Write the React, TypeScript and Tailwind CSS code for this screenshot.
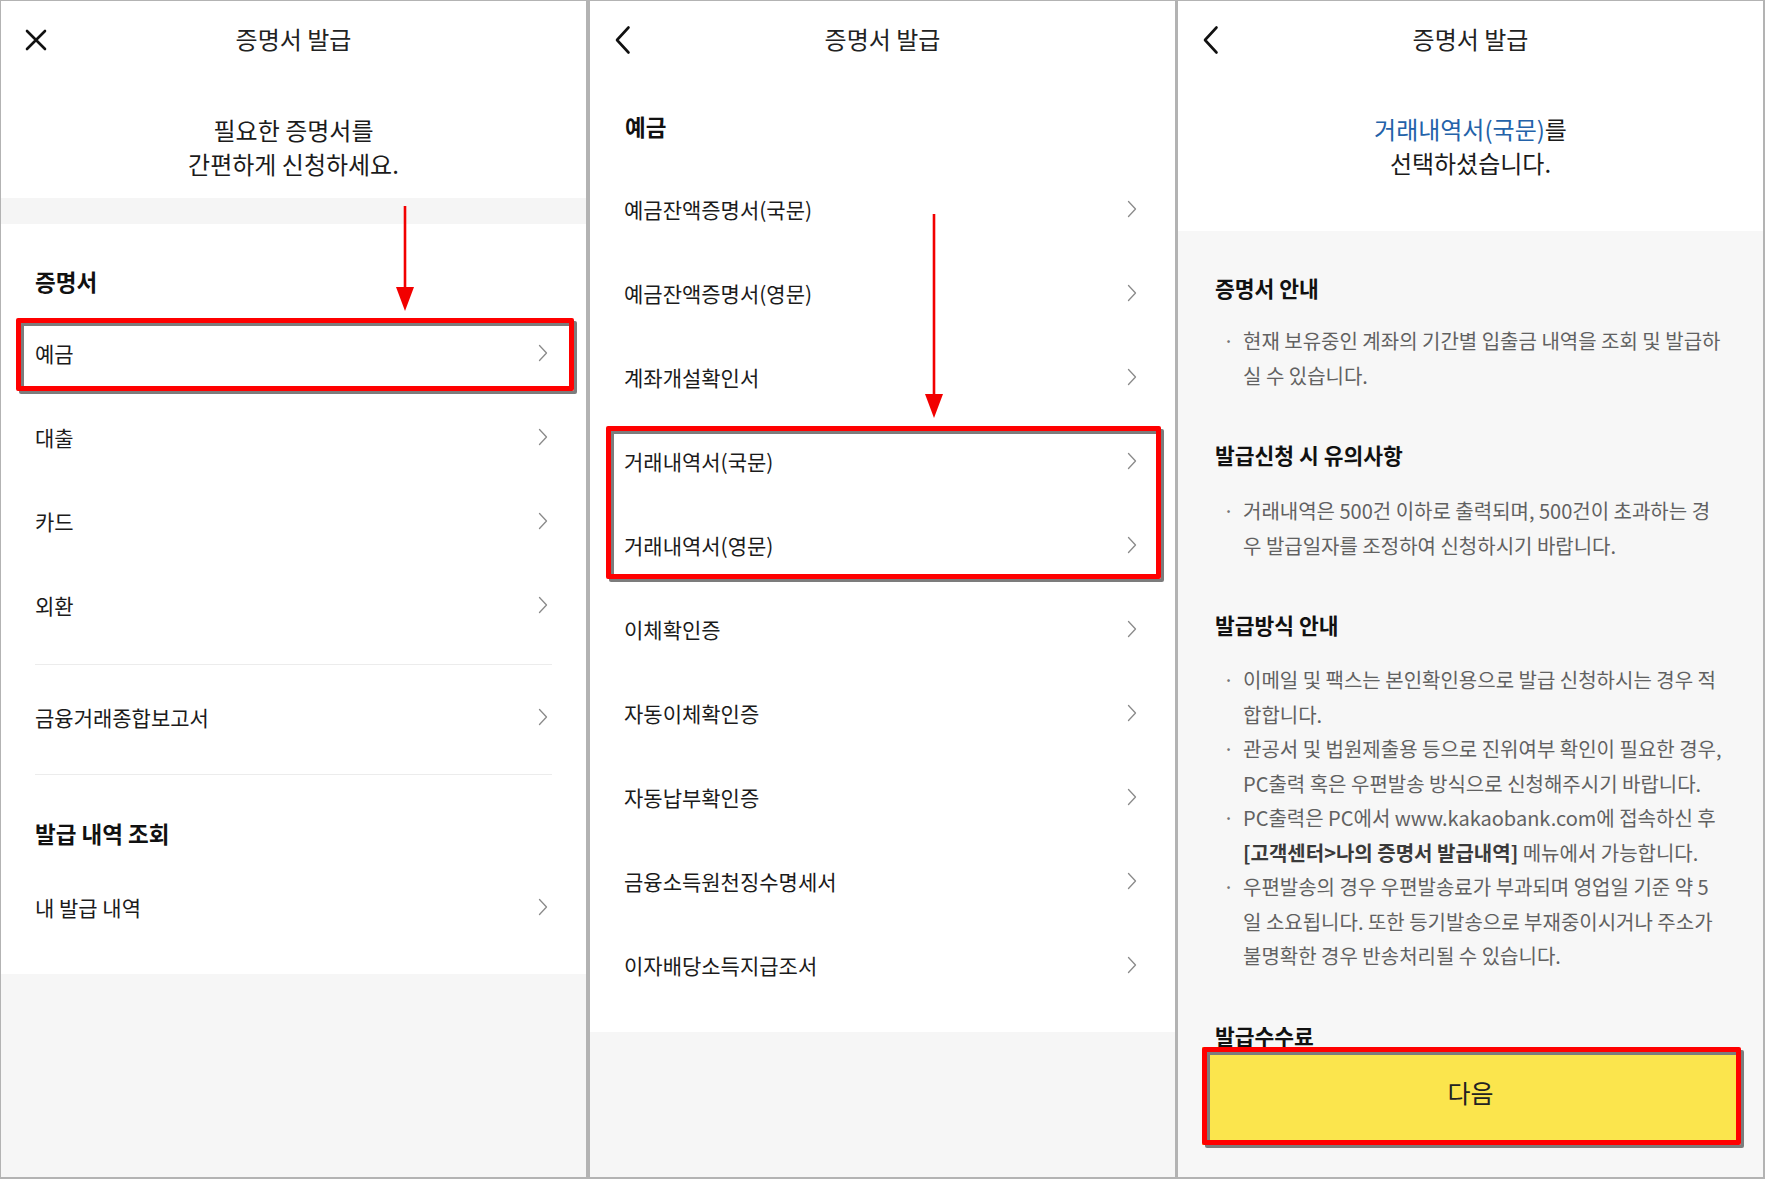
import React from "react";

function Chevron() {
  return (
    <svg width="10" height="18" viewBox="0 0 10 18" fill="none" className="shrink-0">
      <path d="M1.5 1.5 L8.5 9 L1.5 16.5" stroke="#8a8a8a" strokeWidth="1.3" strokeLinecap="round" strokeLinejoin="round" />
    </svg>
  );
}

function CloseIcon() {
  return (
    <svg width="22" height="22" viewBox="0 0 22 22" fill="none">
      <path d="M2 2 L20 20 M20 2 L2 20" stroke="#111" strokeWidth="2.6" strokeLinecap="round" />
    </svg>
  );
}

function BackIcon() {
  return (
    <svg width="17" height="30" viewBox="0 0 17 30" fill="none">
      <path d="M14.5 2.5 L3 15 L14.5 27.5" stroke="#111" strokeWidth="2.6" strokeLinecap="round" strokeLinejoin="round" />
    </svg>
  );
}

function Arrow({ height }: { height: number }) {
  return (
    <svg width="20" height={height} viewBox={`0 0 20 ${height}`} fill="none">
      <path d={`M10 0 L10 ${height - 18}`} stroke="#f20000" strokeWidth="2.6" />
      <polygon points={`1,${height - 24} 19,${height - 24} 10,${height}`} fill="#f20000" />
    </svg>
  );
}

function NavBar({ back }: { back?: boolean }) {
  return (
    <div className="grid h-[80px] shrink-0 grid-cols-[70px_1fr_70px] items-center bg-white pb-[3px]">
      <div className="flex items-center pl-[24px]">{back ? <BackIcon /> : <CloseIcon />}</div>
      <div className="pb-[2px] text-center text-[24px] leading-none text-[#222]">증명서 발급</div>
      <div />
    </div>
  );
}

function Row({ label }: { label: string }) {
  return (
    <div className="flex h-[84px] items-center justify-between pl-[34px] pr-[38px]">
      <span className="text-[21px] leading-none text-[#1b1b1b]">{label}</span>
      <Chevron />
    </div>
  );
}

function RedBox({ className }: { className: string }) {
  return (
    <div
      className={`pointer-events-none absolute rounded-[2px] border-[5px] border-[#ff0000] shadow-[3px_3px_0_#7c7c7c,inset_3px_3px_0_#7c7c7c] ${className}`}
    />
  );
}

function PanelOne() {
  return (
    <div className="relative flex h-full w-[585px] shrink-0 flex-col bg-[#f6f6f6]">
      <NavBar />
      <div className="bg-white pb-[17px] pt-[32px] text-center text-[24px] leading-[34px] text-[#1b1b1b]">
        필요한 증명서를
        <br />
        간편하게 신청하세요.
      </div>
      <div className="h-[26px] bg-[#f5f5f5]" />
      <div className="bg-white pb-[25px] pt-[42px]">
        <h2 className="pl-[34px] text-[22.5px] font-bold leading-[30px] text-[#111]">증명서</h2>
        <div className="relative mt-[15px]">
          <Row label="예금" />
          <Row label="대출" />
          <Row label="카드" />
          <Row label="외환" />
          <RedBox className="left-[15px] right-[12px] top-[7px] h-[73px]" />
        </div>
        <div className="mx-[34px] mt-[17px] h-px bg-[#ececec]" />
        <div className="mt-[10px]">
          <Row label="금융거래종합보고서" />
        </div>
        <div className="mx-[34px] mt-[15px] h-px bg-[#ececec]" />
        <h2 className="mt-[43px] pl-[34px] text-[22.5px] font-bold leading-[30px] text-[#111]">발급 내역 조회</h2>
        <div className="mt-[17px]">
          <Row label="내 발급 내역" />
        </div>
      </div>
      <div className="flex-1" />
      <div className="pointer-events-none absolute left-[394px] top-[205px]">
        <Arrow height={105} />
      </div>
    </div>
  );
}

function PanelTwo() {
  const items = [
    "예금잔액증명서(국문)",
    "예금잔액증명서(영문)",
    "계좌개설확인서",
    "거래내역서(국문)",
    "거래내역서(영문)",
    "이체확인증",
    "자동이체확인증",
    "자동납부확인증",
    "금융소득원천징수명세서",
    "이자배당소득지급조서",
  ];
  return (
    <div className="relative flex h-full w-[585px] shrink-0 flex-col bg-[#f6f6f6]">
      <NavBar back />
      <div className="bg-white pb-[25px] pt-[30px]">
        <h2 className="pl-[35px] text-[22.5px] font-bold leading-[30px] text-[#111]">예금</h2>
        <div className="relative mt-[26px]">
          {items.map((it) => (
            <Row key={it} label={it} />
          ))}
          <RedBox className="left-[16px] right-[14px] top-[259px] h-[153px]" />
        </div>
      </div>
      <div className="flex-1" />
      <div className="pointer-events-none absolute left-[334px] top-[213px]">
        <Arrow height={204} />
      </div>
    </div>
  );
}

function Bullet({ lines }: { lines: React.ReactNode[] }) {
  return (
    <div className="flex">
      <span className="w-[28px] shrink-0 pl-[8px] text-[#777]">·</span>
      <div>
        {lines.map((l, i) => (
          <div key={i} className="whitespace-nowrap">
            {l}
          </div>
        ))}
      </div>
    </div>
  );
}

function PanelThree() {
  return (
    <div className="flex h-full flex-1 flex-col bg-[#f7f7f7]">
      <NavBar back />
      <div className="bg-white pb-[51px] pt-[31px] text-center text-[24px] leading-[34px] text-[#1b1b1b]">
        <span className="text-[#2362a9]">거래내역서(국문)</span>를
        <br />
        선택하셨습니다.
      </div>
      <div className="flex min-h-0 flex-1 flex-col">
        <div className="min-h-0 flex-1 overflow-hidden pl-[37px] pr-[10px] pt-[42px]">
          <h3 className="text-[21.5px] font-bold leading-[30px] text-[#111]">증명서 안내</h3>
          <div className="mt-[20px] text-[20px] leading-[35px] text-[#616161]">
            <Bullet lines={["현재 보유중인 계좌의 기간별 입출금 내역을 조회 및 발급하", "실 수 있습니다."]} />
          </div>
          <h3 className="mt-[47px] text-[21.5px] font-bold leading-[30px] text-[#111]">발급신청 시 유의사항</h3>
          <div className="mt-[23px] text-[20px] leading-[35px] text-[#616161]">
            <Bullet lines={["거래내역은 500건 이하로 출력되며, 500건이 초과하는 경", "우 발급일자를 조정하여 신청하시기 바랍니다."]} />
          </div>
          <h3 className="mt-[47px] text-[21.5px] font-bold leading-[30px] text-[#111]">발급방식 안내</h3>
          <div className="mt-[23px] text-[20px] leading-[34.5px] text-[#616161]">
            <Bullet lines={["이메일 및 팩스는 본인확인용으로 발급 신청하시는 경우 적", "합합니다."]} />
            <Bullet lines={["관공서 및 법원제출용 등으로 진위여부 확인이 필요한 경우,", "PC출력 혹은 우편발송 방식으로 신청해주시기 바랍니다."]} />
            <Bullet
              lines={[
                "PC출력은 PC에서 www.kakaobank.com에 접속하신 후",
                <>
                  <span className="font-bold text-[#3a3a3a]">[고객센터&gt;나의 증명서 발급내역]</span> 메뉴에서 가능합니다.
                </>,
              ]}
            />
            <Bullet
              lines={[
                "우편발송의 경우 우편발송료가 부과되며 영업일 기준 약 5",
                "일 소요됩니다. 또한 등기발송으로 부재중이시거나 주소가",
                "불명확한 경우 반송처리될 수 있습니다.",
              ]}
            />
          </div>
          <h3 className="mt-[47px] text-[21.5px] font-bold leading-[30px] text-[#111]">발급수수료</h3>
        </div>
        <div className="relative shrink-0 px-[24px] pb-[32px]">
          <div className="flex h-[98px] items-center justify-center bg-[#fbe54d] pb-[6px] text-[25px] text-[#222]">다음</div>
          <RedBox className="left-[24px] right-[22px] top-0 h-[98px]" />
        </div>
      </div>
    </div>
  );
}

export default function App() {
  return (
    <div className="flex h-[1179px] w-[1765px] overflow-hidden bg-[#b3b3b3] pb-[2px] pl-[1px] pr-[2px] pt-[1px] font-['Noto_Sans_CJK_KR','Noto_Sans',sans-serif]">
      <PanelOne />
      <div className="w-[4px] shrink-0" />
      <PanelTwo />
      <div className="w-[3px] shrink-0" />
      <PanelThree />
    </div>
  );
}
